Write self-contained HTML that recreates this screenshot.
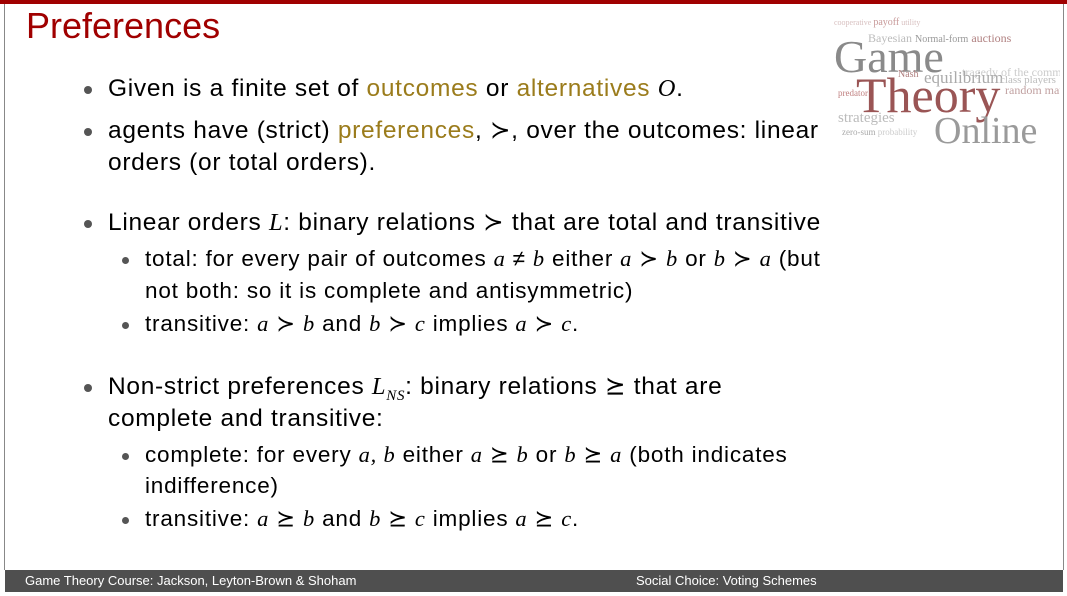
<!DOCTYPE html>
<html><head><meta charset="utf-8"><style>
body{margin:0;width:1067px;height:596px;background:#fff;position:relative;overflow:hidden;font-family:"Liberation Sans",sans-serif;color:#000}
.l{position:absolute;white-space:nowrap;font-size:24.5px;letter-spacing:0.7px;line-height:1}
.s{font-size:22.5px;letter-spacing:0.8px}
.m{font-family:"Liberation Serif",serif;font-style:italic}
.o{color:#9b7c1c}
.b{position:absolute;width:8px;height:8px;border-radius:50%;background:#555}
.bs{width:7px;height:7px}
</style></head><body>
<div style="position:absolute;left:0;top:0;width:1067px;height:4px;background:#a00000"></div>
<div style="position:absolute;left:4px;top:4px;width:1058px;height:566px;border-left:1px solid #888;border-right:1px solid #888"></div>
<div style="position:absolute;left:5px;top:570px;width:1058px;height:22px;background:#4f4f4f;color:#fff;font-size:13px;line-height:22px">
<span style="position:absolute;left:20px">Game Theory Course: Jackson, Leyton-Brown &amp; Shoham</span>
<span style="position:absolute;left:631px">Social Choice: Voting Schemes</span></div>
<div class="l" style="left:26px;top:8px;font-size:36px;letter-spacing:0;color:#a00000">Preferences</div>
<svg style="position:absolute;left:832px;top:14px" width="228" height="135" font-family="Liberation Serif,serif">
<text x="2" y="11" font-size="8" fill="#d8c0c0">cooperative <tspan fill="#c89a9a" font-size="10">payoff</tspan> utility</text>
<text x="36" y="28" font-size="12" fill="#bbb">Bayesian <tspan fill="#999" font-size="10">Normal-form</tspan> <tspan fill="#b08080">auctions</tspan></text>
<text x="2" y="58" font-size="46" fill="#8a8a8a">Game</text>
<text x="130" y="62" font-size="12" fill="#ccc">tragedy of the commons</text>
<text x="66" y="63" font-size="10" fill="#b08080">Nash</text><text x="92" y="69" font-size="17" fill="#aaa">equilibrium</text>
<text x="168" y="69" font-size="11" fill="#bbb">class players</text>
<text x="6" y="82" font-size="9" fill="#c08080">predator</text>
<text x="24" y="98" font-size="50" fill="#9a5555">Theory</text>
<text x="173" y="80" font-size="12" fill="#c0a0a0">random math</text>
<text x="6" y="108" font-size="15" fill="#bbb">strategies</text>
<text x="10" y="121" font-size="9" fill="#aaa">zero-sum <tspan fill="#ccc">probability</tspan></text>
<text x="102" y="129" font-size="38" fill="#9a9a9a">Online</text>
</svg>
<div class="b" style="left:84px;top:86px"></div>
<div class="l" style="left:108px;top:77px">Given is a finite set of <span class="o">outcomes</span> or <span class="o">alternatives</span> <span class="m">O</span>.</div>
<div class="b" style="left:84px;top:128px"></div>
<div class="l" style="left:108px;top:119px">agents have (strict) <span class="o">preferences</span>, ≻, over the outcomes: linear</div>
<div class="l" style="left:108px;top:151px">orders (or total orders).</div>
<div class="b" style="left:84px;top:220px"></div>
<div class="l" style="left:108px;top:211px">Linear orders <span class="m">L</span>: binary relations ≻ that are total and transitive</div>
<div class="b bs" style="left:122px;top:257px"></div>
<div class="l s" style="left:145px;top:248px">total: for every pair of outcomes <span class="m">a</span> ≠ <span class="m">b</span> either <span class="m">a</span> ≻ <span class="m">b</span> or <span class="m">b</span> ≻ <span class="m">a</span> (but</div>
<div class="l s" style="left:145px;top:280px">not both: so it is complete and antisymmetric)</div>
<div class="b bs" style="left:122px;top:322px"></div>
<div class="l s" style="left:145px;top:313px">transitive: <span class="m">a</span> ≻ <span class="m">b</span> and <span class="m">b</span> ≻ <span class="m">c</span> implies <span class="m">a</span> ≻ <span class="m">c</span>.</div>
<div class="b" style="left:84px;top:384px"></div>
<div class="l" style="left:108px;top:375px">Non-strict preferences <span class="m">L<sub style="font-size:15px">NS</sub></span>: binary relations ⪰ that are</div>
<div class="l" style="left:108px;top:407px">complete and transitive:</div>
<div class="b bs" style="left:122px;top:453px"></div>
<div class="l s" style="left:145px;top:444px">complete: for every <span class="m">a, b</span> either <span class="m">a</span> ⪰ <span class="m">b</span> or <span class="m">b</span> ⪰ <span class="m">a</span> (both indicates</div>
<div class="l s" style="left:145px;top:475px">indifference)</div>
<div class="b bs" style="left:122px;top:517px"></div>
<div class="l s" style="left:145px;top:508px">transitive: <span class="m">a</span> ⪰ <span class="m">b</span> and <span class="m">b</span> ⪰ <span class="m">c</span> implies <span class="m">a</span> ⪰ <span class="m">c</span>.</div>
</body></html>
